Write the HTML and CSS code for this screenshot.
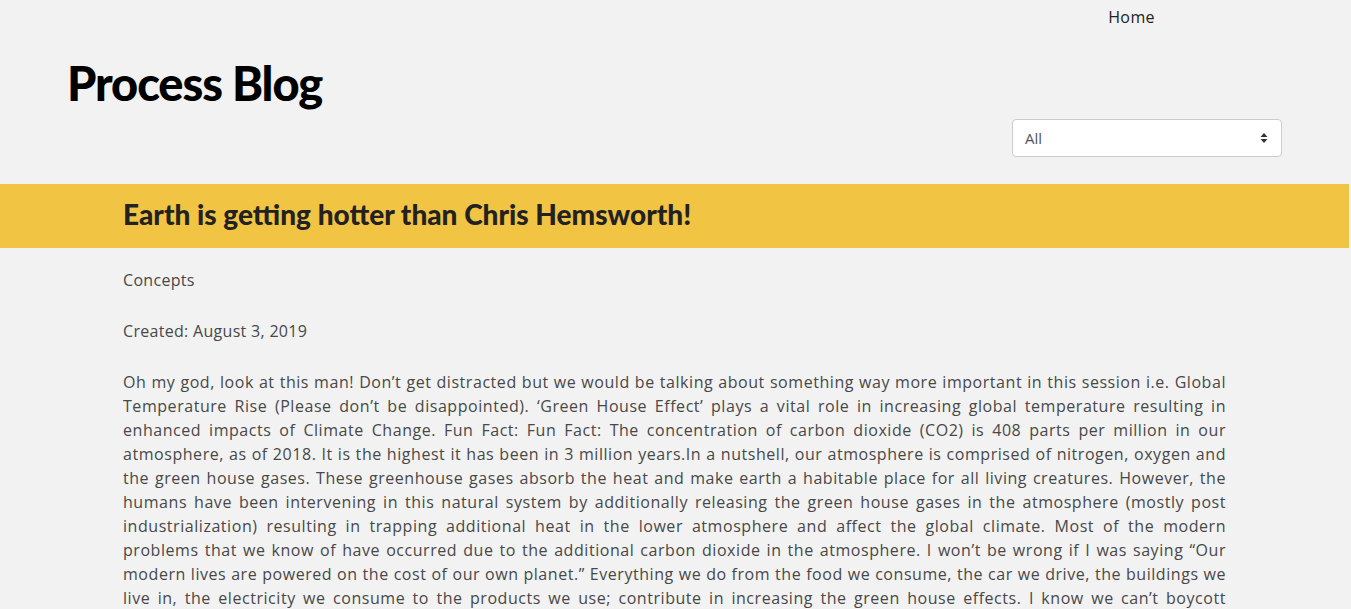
FILE: index.html
```html
<!DOCTYPE html>
<html lang="en">
<head>
<meta charset="utf-8">
<title>Process Blog</title>
<link rel="stylesheet" href="styles.css">
</head>
<body>
<nav class="topnav">
  <a class="nav-link" href="#">Home</a>
</nav>
<header class="site-header">
  <h1 class="site-title">Process Blog</h1>
</header>
<div class="filter-row">
  <div class="select-box">
    <span class="select-value">All</span>
    <svg class="select-arrows" width="8" height="12" viewBox="0 0 8 12"><path d="M4 1 L7.5 5 L0.5 5 Z M4 11 L7.5 7 L0.5 7 Z" fill="#333"/></svg>
  </div>
</div>
<section class="post-band">
  <h2 class="post-title">Earth is getting hotter than Chris Hemsworth!</h2>
</section>
<main class="post-body">
  <p class="meta">Concepts</p>
  <p class="meta">Created: August 3, 2019</p>
  <p class="post-text">Oh my god, look at this man! Don’t get distracted but we would be talking about something way more important in this session i.e. Global Temperature Rise (Please don’t be disappointed). ‘Green House Effect’ plays a vital role in increasing global temperature resulting in enhanced impacts of Climate Change. Fun Fact: Fun Fact: The concentration of carbon dioxide (CO2) is 408 parts per million in our atmosphere, as of 2018. It is the highest it has been in 3 million years.In a nutshell, our atmosphere is comprised of nitrogen, oxygen and the green house gases. These greenhouse gases absorb the heat and make earth a habitable place for all living creatures. However, the humans have been intervening in this natural system by additionally releasing the green house gases in the atmosphere (mostly post industrialization) resulting in trapping additional heat in the lower atmosphere and affect the global climate. Most of the modern problems that we know of have occurred due to the additional carbon dioxide in the atmosphere. I won’t be wrong if I was saying “Our modern lives are powered on the cost of our own planet.” Everything we do from the food we consume, the car we drive, the buildings we live in, the electricity we consume to the products we use; contribute in increasing the green house effects. I know we can’t boycott everything at once, but we can surely make small changes in our everyday lives to reduce our impact on the planet.</p>
</main>
</body>
</html>
```
FILE: styles.css
```css
html, body {
  margin: 0;
  padding: 0;
  background: #f2f2f2;
}
body {
  font-family: "Open Sans", "Liberation Sans", sans-serif;
  color: #484848;
}
.topnav {
  display: flex;
  justify-content: flex-end;
  height: 34px;
  align-items: center;
  padding-right: 196px;
}
.nav-link {
  color: #222;
  text-decoration: none;
  font-size: 16px;
  letter-spacing: 0.4px;
}
.site-header {
  padding-left: 67px;
  height: 84px;
  display: flex;
  align-items: flex-start;
}
.site-title {
  margin: 0;
  padding-top: 20px;
  font-family: "Lato", sans-serif;
  font-weight: 900;
  font-size: 47px;
  line-height: 58px;
  color: #000;
  letter-spacing: -1.1px;
}
.filter-row {
  display: flex;
  justify-content: flex-end;
  padding-right: 69px;
  padding-top: 1px;
  height: 65px;
}
.select-box {
  width: 270px;
  height: 38px;
  box-sizing: border-box;
  background: #fff;
  border: 1px solid #ccc;
  border-radius: 4px;
  display: flex;
  align-items: center;
  justify-content: space-between;
  padding: 0 13px 0 12px;
}
.select-value {
  font-size: 15px;
  color: #555;
}
.select-arrows {
  display: block;
}
.post-band {
  width: 1349px;
  height: 64px;
  background: #f2c443;
  display: flex;
  align-items: center;
  box-sizing: border-box;
  padding-left: 123px;
  padding-bottom: 5px;
}
.post-title {
  margin: 0;
  font-family: "Lato", sans-serif;
  font-weight: 900;
  font-size: 28px;
  color: #222;
}
.post-body {
  padding: 20px 0 0 123px;
  width: 1103px;
}
.meta {
  margin: 0 0 27px;
  font-size: 16px;
  line-height: 24px;
  letter-spacing: 0.3px;
}
.post-text {
  margin: 0;
  font-size: 16px;
  line-height: 24px;
  text-align: justify;
  letter-spacing: 0.55px;
}
```
